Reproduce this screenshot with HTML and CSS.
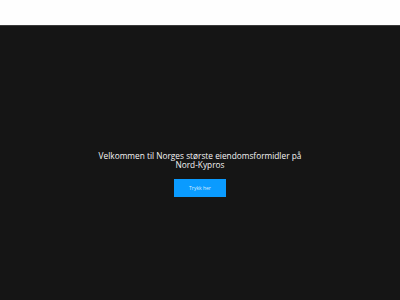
FILE: index.html
```html
<!DOCTYPE html>
<html lang="no">
<head>
<meta charset="utf-8">
<link rel="stylesheet" href="styles.css">
</head>
<body>
<header class="topbar"></header>
<section class="hero">
  <h1 class="hero-title">Velkommen til Norges største eiendomsformidler på Nord-Kypros</h1>
  <a class="hero-btn" href="#">Trykk her</a>
</section>
</body>
</html>
```

FILE: styles.css
```css
html, body {
  margin: 0;
  padding: 0;
  height: 100%;
}
body {
  font-family: "Open Sans", Lato, sans-serif;
  background: #151515;
  overflow: hidden;
}
.topbar {
  height: 26px;
  background: #fefefe;
  border-bottom: 1px solid #3a3a3a;
  box-sizing: border-box;
}
.hero {
  height: 274px;
  background: #151515;
  display: flex;
  flex-direction: column;
  align-items: center;
  padding-top: 126px;
  box-sizing: border-box;
}
.hero-title {
  margin: 0;
  width: 220px;
  font-size: 8.3px;
  line-height: 8.5px;
  font-weight: 400;
  color: #f4f4f4;
  text-align: center;
}
.hero-btn {
  margin-top: 10px;
  width: 52px;
  height: 18px;
  background: #0a9bff;
  color: #d8ecff;
  font-size: 5px;
  text-decoration: none;
  display: flex;
  align-items: center;
  justify-content: center;
}
```
